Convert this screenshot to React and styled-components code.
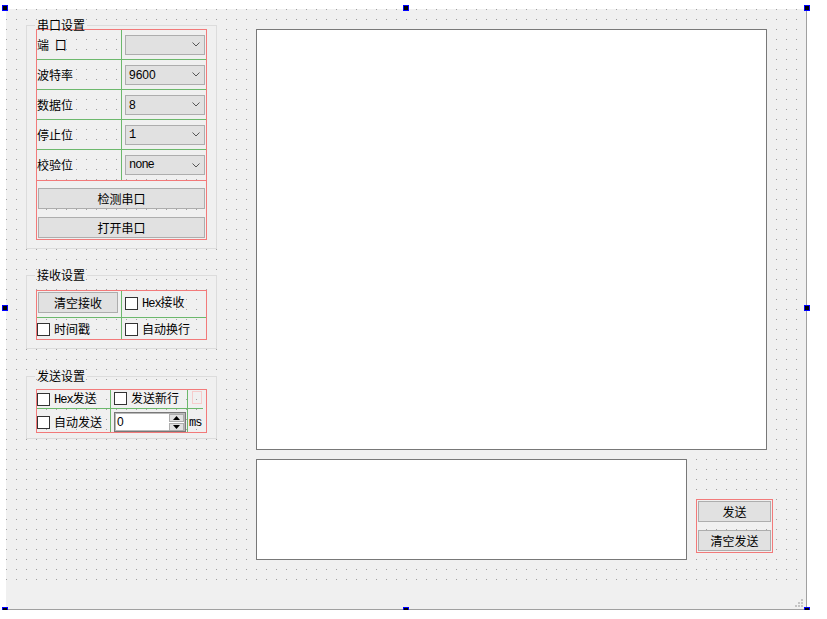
import React from 'react'
import styled, { createGlobalStyle } from 'styled-components'

const GlobalStyle = createGlobalStyle`
  html, body {
    margin: 0;
    padding: 0;
    background: #ffffff;
  }
  body {
    font-family: "Noto Sans CJK SC", "Liberation Sans", sans-serif;
    font-size: 12px;
    color: #000;
  }
  * { box-sizing: border-box; }
`

const RED = '#f27a7a'
const GREEN = '#6cb86c'
const BG = '#f0f0f0'
const EDGE = '#787878'

const Form = styled.div`
  position: relative;
  margin: 9px 0 0 6px;
  width: 801px;
  height: 601px;
  border-right: 1px solid #a0a0a0;
  border-bottom: 1px solid #a0a0a0;
  background: ${BG};
  display: flex;
  flex-direction: column;
`

// designer grid: one dark pixel every 10px
const Central = styled.div`
  height: 580px;
  display: flex;
  align-items: flex-start;
  background-color: ${BG};
  background-image:
    linear-gradient(to right, transparent 1px, ${BG} 1px),
    linear-gradient(to bottom, #a0a0a0 1px, ${BG} 1px);
  background-size: 10px 10px;
`

const StatusBar = styled.div`
  position: relative;
  height: 20px;
`

const Grip = styled.svg`
  position: absolute;
  right: 3px;
  bottom: 2px;
`

const Handle = styled.div`
  position: absolute;
  width: 6px;
  height: 6px;
  border: 1px solid #0000ff;
  background: #000;
`

const LeftCol = styled.div`
  margin: 12px 0 0 20px;
  width: 191px;
  display: flex;
  flex-direction: column;
`

const Group = styled.fieldset`
  margin: ${p => p.$gap || 0}px 0 0 0;
  padding: ${p => p.$top}px 9px ${p => p.$bottom}px 9px;
  border: 1px solid #dcdcdc;
  min-width: 0;
`

const Legend = styled.legend`
  margin-left: -1px;
  padding: 0 2px;
  font-size: 12px;
  line-height: 8px;
`

const LayoutGrid = styled.div`
  display: grid;
  grid-template-columns: ${p => p.$cols};
  grid-template-rows: ${p => p.$rows};
  border: 1px solid ${RED};
`

const Cell = styled.div`
  display: flex;
  align-items: ${p => (p.$top !== undefined ? 'flex-start' : 'center')};
  padding-top: ${p => p.$top || 0}px;
  padding-left: ${p => p.$left || 0}px;
  border-right: ${p => (p.$r ? `1px solid ${GREEN}` : 'none')};
  border-bottom: ${p => (p.$b ? `1px solid ${GREEN}` : 'none')};
  white-space: nowrap;
`

const Label = styled.span`
  line-height: 14px;
  word-spacing: 3px;
`

const Combo = styled.div`
  width: 80px;
  height: 20px;
  border: 1px solid #adadad;
  background: #e1e1e1;
  display: flex;
  align-items: center;
  justify-content: space-between;
  padding: 0 4px 0 3px;
  font-family: ${p => (p.$mono ? '"Liberation Mono", monospace' : '"Liberation Sans", sans-serif')};
  letter-spacing: ${p => (p.$mono ? '-1px' : '0')};
  font-size: 12px;
`

const ButtonStack = styled.div`
  margin-top: -1px;
  border: 1px solid ${RED};
  padding: ${p => p.$pad};
  display: flex;
  flex-direction: column;
  gap: 8px;
`

const Button = styled.div`
  width: ${p => p.$w}px;
  height: 21px;
  border: 1px solid #adadad;
  background: #e1e1e1;
  display: flex;
  align-items: center;
  justify-content: center;
  line-height: 14px;
`

const Check = styled.label`
  display: flex;
  align-items: center;
  gap: 4px;
  line-height: 14px;
`

const Box = styled.span`
  width: 13px;
  height: 13px;
  border: 1px solid #333;
  background: #fff;
  flex: none;
`

const Mono = styled.span`
  font-family: "Liberation Mono", monospace;
  letter-spacing: -1px;
`

const Spacer = styled.div`
  width: 10px;
  height: 13px;
  border: 1px solid #f6cccc;
`

const Spin = styled.div`
  width: 72px;
  height: 20px;
  border: 1px solid ${EDGE};
  box-shadow: inset 0 0 0 1px #b9b9b9;
  background: #fff;
  display: flex;
  align-items: center;
  justify-content: space-between;
  padding: 0 1px 0 2px;
  font-family: "Liberation Sans", sans-serif;
`

const SpinArrows = styled.div`
  display: flex;
  flex-direction: column;
  gap: 1px;
`

const SpinBtn = styled.div`
  width: 15px;
  height: 8px;
  border: 1px solid #adadad;
  background: #e1e1e1;
  display: flex;
  align-items: center;
  justify-content: center;
`

const Unit = styled.span`
  font-family: "Liberation Mono", monospace;
  letter-spacing: -1px;
  font-size: 12px;
  margin-top: 7px;
`

const RightCol = styled.div`
  margin: 20px 0 0 39px;
  display: flex;
  flex-direction: column;
`

const TextEdit = styled.div`
  width: ${p => p.$w}px;
  height: ${p => p.$h}px;
  border: 1px solid ${EDGE};
  background: #fff;
`

const SendRow = styled.div`
  margin-top: 9px;
  display: flex;
  align-items: flex-start;
`

const SendButtons = styled(ButtonStack)`
  margin: 40px 0 0 9px;
`

const Chevron = () => (
  <svg width="8" height="5" viewBox="0 0 8 5">
    <polyline points="0.5,0.5 4,4 7.5,0.5" fill="none" stroke="#555" strokeWidth="1" />
  </svg>
)

const Tri = ({ up }) => (
  <svg width="7" height="4" viewBox="0 0 7 4">
    <polygon points={up ? '0,4 7,4 3.5,0' : '0,0 7,0 3.5,4'} fill="#000" />
  </svg>
)

const CheckBox = ({ children }) => (
  <Check>
    <Box />
    <span>{children}</span>
  </Check>
)

const serialRows = [
  ['端 口', '', false],
  ['波特率', '9600', false],
  ['数据位', '8', false],
  ['停止位', '1', true],
  ['校验位', 'none', true],
]

const handles = [
  [-4, -4], [397, -4], [798, -4],
  [-4, 296], [798, 296],
  [-4, 598], [397, 598], [798, 598],
]

function App() {
  return (
    <>
      <GlobalStyle />
      <Form>
        <Central>
          <LeftCol>
            <Group $top={0} $bottom={8}>
              <Legend>串口设置</Legend>
              <LayoutGrid $cols="85px 84px" $rows="repeat(4, 30px) 30px">
                {serialRows.map(([label, value, mono], i) => (
                  <React.Fragment key={label}>
                    <Cell $r $b={i < 4}>
                      <Label>{label}</Label>
                    </Cell>
                    <Cell $b={i < 4} $left={3}>
                      <Combo $mono={mono}>
                        <span>{value}</span>
                        <Chevron />
                      </Combo>
                    </Cell>
                  </React.Fragment>
                ))}
              </LayoutGrid>
              <ButtonStack $pad="7px 1px 1px 1px">
                <Button $w={167}>检测串口</Button>
                <Button $w={167}>打开串口</Button>
              </ButtonStack>
            </Group>

            <Group $gap={22} $top={11} $bottom={8}>
              <Legend>接收设置</Legend>
              <LayoutGrid $cols="85px 84px" $rows="27px 21px">
                <Cell $r $b $top={1} $left={1}>
                  <Button $w={80}>清空接收</Button>
                </Cell>
                <Cell $b $top={4} $left={3}>
                  <CheckBox><Mono>Hex</Mono>接收</CheckBox>
                </Cell>
                <Cell $r $top={4}>
                  <CheckBox>时间戳</CheckBox>
                </Cell>
                <Cell $top={4} $left={3}>
                  <CheckBox>自动换行</CheckBox>
                </Cell>
              </LayoutGrid>
            </Group>

            <Group $gap={23} $top={9} $bottom={5}>
              <Legend>发送设置</Legend>
              <LayoutGrid $cols="74px 77px 15px" $rows="19px 23px">
                <Cell $r $b $top={1}>
                  <CheckBox><Mono>Hex</Mono>发送</CheckBox>
                </Cell>
                <Cell $r $b $top={1} $left={3}>
                  <CheckBox>发送新行</CheckBox>
                </Cell>
                <Cell $b $top={1} $left={4}>
                  <Spacer />
                </Cell>
                <Cell $r $top={6}>
                  <CheckBox>自动发送</CheckBox>
                </Cell>
                <Cell $r $top={3} $left={3}>
                  <Spin>
                    <span>0</span>
                    <SpinArrows>
                      <SpinBtn><Tri up /></SpinBtn>
                      <SpinBtn><Tri /></SpinBtn>
                    </SpinArrows>
                  </Spin>
                </Cell>
                <Cell $top={0} $left={1}>
                  <Unit>ms</Unit>
                </Cell>
              </LayoutGrid>
            </Group>
          </LeftCol>

          <RightCol>
            <TextEdit $w={511} $h={421} />
            <SendRow>
              <TextEdit $w={431} $h={101} />
              <SendButtons $pad="1px">
                <Button $w={73}>发送</Button>
                <Button $w={73}>清空发送</Button>
              </SendButtons>
            </SendRow>
          </RightCol>
        </Central>

        <StatusBar>
          <Grip width="8" height="8" viewBox="0 0 8 8">
            <rect x="6" y="0" width="2" height="2" fill="#c4c4c4" />
            <rect x="3" y="3" width="2" height="2" fill="#c4c4c4" />
            <rect x="6" y="3" width="2" height="2" fill="#c4c4c4" />
            <rect x="0" y="6" width="2" height="2" fill="#c4c4c4" />
            <rect x="3" y="6" width="2" height="2" fill="#c4c4c4" />
            <rect x="6" y="6" width="2" height="2" fill="#c4c4c4" />
          </Grip>
        </StatusBar>

        {handles.map(([x, y]) => (
          <Handle key={`${x}-${y}`} style={{ left: x, top: y }} />
        ))}
      </Form>
    </>
  )
}

export default App
